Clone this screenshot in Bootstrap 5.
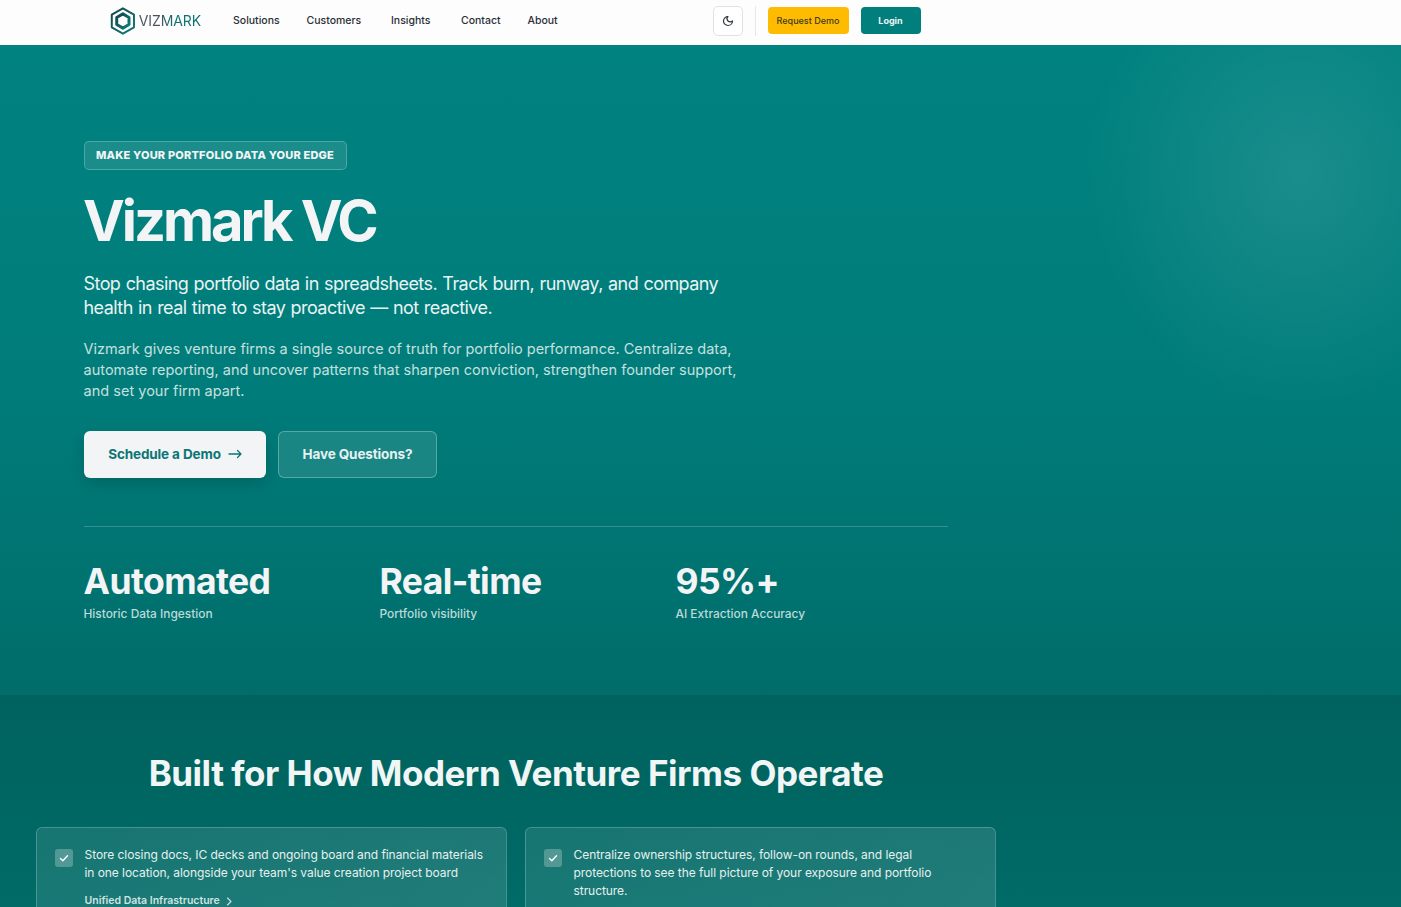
<!DOCTYPE html>
<html lang="en">
<head>
    <meta charset="UTF-8">
    <meta name="viewport" content="width=device-width, initial-scale=1.0">
    <title>Vizmark VC</title>
    <link href="https://cdn.jsdelivr.net/npm/bootstrap@5.3.0/dist/css/bootstrap.min.css" rel="stylesheet">
    <style>
        html, body { height: 907px; overflow: hidden; }
        body { font-family: Inter, "Liberation Sans", sans-serif; background: #00635f; }

        .top-nav { height: 45px; background: #fdfdfe; padding: 0 0 4px 110px; }
        .brand-box { width: 91px; gap: 3px; }
        .brand-name { font-size: 14px; font-weight: 400; letter-spacing: -0.1px; background: linear-gradient(90deg, #4b525c 0%, #4b525c 30%, #0b7472 60%); -webkit-background-clip: text; background-clip: text; color: transparent; }
        .menu-row { position: relative; height: 41px; margin-left: 32px; width: 480px; }
        .menu-link { position: absolute; top: 0; line-height: 41px; font-size: 10.5px; font-weight: 500; color: #2a2f36; text-decoration: none; }
        .theme-btn { width: 30px; height: 30px; border: 1px solid #dfe1e5; border-radius: 5px; background: #fff; }
        .nav-sep { width: 1px; height: 30px; background: #e5e7eb; margin: 0 12px; }
        .demo-btn, .login-btn { height: 27px; border-radius: 4px; font-size: 9px; border: 0; padding: 0 1px 0 0; line-height: 27px; text-align: center; }
        .demo-btn { width: 81px; background: #ffbb00; color: #3d3a1e; font-weight: 500; }
        .login-btn { width: 60px; background: #007f7d; color: #f0f6f6; font-weight: 700; margin-left: 12px; }

        .hero-band { height: 650px; padding: 96px 0 0 84px; color: #f3f4f5;
            background: radial-gradient(ellipse 215px 235px at 1300px 130px, rgba(255,255,255,.1), rgba(255,255,255,0) 100%), linear-gradient(180deg, #008280 0%, #007d7b 50%, #006d6a 100%); }
        .hero-tag { display: inline-block; height: 29px; line-height: 27px; padding: 0 12px 0 11px; font-size: 11px; font-weight: 800; letter-spacing: .19px; border: 1px solid rgba(255,255,255,.22); border-radius: 5px; background: rgba(255,255,255,.1); }
        .hero-title { font-size: 56px; line-height: 60px; font-weight: 700; letter-spacing: -3.05px; margin: 21px 0 0 -1px; }
        .hero-lead { font-size: 18px; line-height: 24px; margin: 21px 0 0 -.5px; width: 680px; letter-spacing: -.56px; word-spacing: .79px; color: #eaf3f3; }
        .hero-copy { font-size: 14.5px; line-height: 21px; margin: 18px 0 0 -.5px; width: 680px; letter-spacing: .02px; color: #c6e0df; }
        .hero-actions { margin-top: 30px; gap: 12px; }
        .cta-main, .cta-alt { height: 47px; border-radius: 6px; font-size: 13.5px; font-weight: 700; padding: 0 0 1px; letter-spacing: -.12px; gap: 7px; }
        .cta-main { width: 182px; background: #f3f4f5; color: #0a7675; box-shadow: 0 6px 16px rgba(0,0,0,.14); }
        .cta-alt { width: 159px; background: rgba(255,255,255,.1); color: #e6f2f1; border: 1px solid rgba(255,255,255,.28); }
        .hero-rule { width: 864px; height: 1px; background: rgba(255,255,255,.2); margin-top: 48px; }
        .stat-row { width: 888px; margin: 32px 0 0 -.5px; }
        .stat-col { width: 296px; }
        .stat-big { font-size: 35.5px; line-height: 46px; font-weight: 700; letter-spacing: -.6px; }
        .stat-small { font-size: 11.9px; line-height: 18px; font-weight: 500; color: #bcdad9; margin-top: 0; }

        .lower-band { height: 212px; padding-top: 54px; color: #fff; overflow: hidden;
            background: linear-gradient(180deg, #00625e, #006b67); }
        .lower-wrap { width: 960px; margin-left: 36px; }
        .lower-title { font-size: 35px; line-height: 48px; font-weight: 700; letter-spacing: -.48px; text-align: center; color: #f0f6f5; margin: 0 0 30px; }
        .lower-grid { display: grid; grid-template-columns: 471px 471px; gap: 18px; }
        .feature-box { height: 200px; padding: 18px; border: 1px solid rgba(255,255,255,.2); border-radius: 6px; background: linear-gradient(135deg, rgba(255,255,255,.09), rgba(255,255,255,.13)); gap: 11.5px; }
        .check-box { width: 18px; height: 18px; flex: none; border-radius: 3px; background: rgba(255,255,255,.25); margin-top: 3px; }
        .feature-text { font-size: 12px; line-height: 18px; letter-spacing: -.06px; color: #e6f1f0; margin: 0; }
        .feature-link { font-size: 10.5px; line-height: 18px; font-weight: 600; color: #cfe3e2; margin-top: 10px; }
    </style>
</head>
<body>

    <nav class="top-nav d-flex align-items-center">
        <div class="brand-box d-flex align-items-center">
            <svg width="26" height="28" viewBox="0 0 26 28" fill="none">
                <defs>
                    <linearGradient id="logoFade" x1="0" y1="0" x2="1" y2="1">
                        <stop offset="0" stop-color="#14444c"/>
                        <stop offset="1" stop-color="#0a8079"/>
                    </linearGradient>
                </defs>
                <path d="M13 1.2 24.2 7.6V20.4L13 26.8 1.8 20.4V7.6Z" stroke="url(#logoFade)" stroke-width="2" stroke-linejoin="round"/>
                <path d="M13 6.8 19.2 10.4V17.6L13 21.2 6.8 17.6V10.4Z" stroke="url(#logoFade)" stroke-width="3" stroke-linejoin="round"/>
            </svg>
            <span class="brand-name">VIZMARK</span>
        </div>
        <div class="menu-row">
            <a class="menu-link" href="#" style="left:0">Solutions</a>
            <a class="menu-link" href="#" style="left:73.5px">Customers</a>
            <a class="menu-link" href="#" style="left:158px">Insights</a>
            <a class="menu-link" href="#" style="left:228px">Contact</a>
            <a class="menu-link" href="#" style="left:294.5px">About</a>
        </div>
        <button class="theme-btn d-flex align-items-center justify-content-center p-0" type="button" aria-label="Toggle theme">
            <svg width="12" height="12" viewBox="0 0 24 24" fill="none" stroke="#33383f" stroke-width="2.4" stroke-linecap="round" stroke-linejoin="round"><path d="M12 3a6 6 0 0 0 9 9 9 9 0 1 1-9-9Z"/></svg>
        </button>
        <div class="nav-sep"></div>
        <button class="btn demo-btn" type="button">Request Demo</button>
        <button class="btn login-btn" type="button">Login</button>
    </nav>

    <section class="hero-band">
        <span class="hero-tag">MAKE YOUR PORTFOLIO DATA YOUR EDGE</span>
        <h1 class="hero-title">Vizmark VC</h1>
        <p class="hero-lead">Stop chasing portfolio data in spreadsheets. Track burn, runway, and company health in real time to stay proactive — not reactive.</p>
        <p class="hero-copy">Vizmark gives venture firms a single source of truth for portfolio performance. Centralize data, automate reporting, and uncover patterns that sharpen conviction, strengthen founder support, and set your firm apart.</p>
        <div class="hero-actions d-flex">
            <button class="btn cta-main d-flex align-items-center justify-content-center" type="button">Schedule a Demo
                <svg width="14" height="10" viewBox="0 0 14 10" fill="none" stroke="#0a7675" stroke-width="1.3" stroke-linecap="round" stroke-linejoin="round"><path d="M1 5h12M9.5 1.5 13 5l-3.5 3.5"/></svg>
            </button>
            <button class="btn cta-alt d-flex align-items-center justify-content-center" type="button">Have Questions?</button>
        </div>
        <div class="hero-rule"></div>
        <div class="stat-row d-flex">
            <div class="stat-col">
                <div class="stat-big">Automated</div>
                <div class="stat-small">Historic Data Ingestion</div>
            </div>
            <div class="stat-col">
                <div class="stat-big">Real-time</div>
                <div class="stat-small">Portfolio visibility</div>
            </div>
            <div class="stat-col">
                <div class="stat-big">95%+</div>
                <div class="stat-small">AI Extraction Accuracy</div>
            </div>
        </div>
    </section>

    <section class="lower-band">
        <div class="lower-wrap">
            <h2 class="lower-title">Built for How Modern Venture Firms Operate</h2>
            <div class="lower-grid">
                <div class="feature-box d-flex">
                    <span class="check-box d-flex align-items-center justify-content-center">
                        <svg width="10" height="10" viewBox="0 0 10 10" fill="none" stroke="#fff" stroke-width="1.4" stroke-linecap="round" stroke-linejoin="round"><path d="M1.5 5.5l2.3 2.2 4.7-5"/></svg>
                    </span>
                    <div>
                        <p class="feature-text">Store closing docs, IC decks and ongoing board and financial materials in one location, alongside your team's value creation project board</p>
                        <div class="feature-link">Unified Data Infrastructure
                            <svg class="ms-1" width="7" height="9" viewBox="0 0 7 9" fill="none" stroke="#cfe3e2" stroke-width="1.1" stroke-linecap="round" stroke-linejoin="round"><path d="M1.5 1l3.5 3.5L1.5 8"/></svg>
                        </div>
                    </div>
                </div>
                <div class="feature-box d-flex">
                    <span class="check-box d-flex align-items-center justify-content-center">
                        <svg width="10" height="10" viewBox="0 0 10 10" fill="none" stroke="#fff" stroke-width="1.4" stroke-linecap="round" stroke-linejoin="round"><path d="M1.5 5.5l2.3 2.2 4.7-5"/></svg>
                    </span>
                    <div>
                        <p class="feature-text">Centralize ownership structures, follow-on rounds, and legal protections to see the full picture of your exposure and portfolio structure.</p>
                    </div>
                </div>
            </div>
        </div>
    </section>

    <script src="https://cdn.jsdelivr.net/npm/bootstrap@5.3.0/dist/js/bootstrap.bundle.min.js"></script>
</body>
</html>
